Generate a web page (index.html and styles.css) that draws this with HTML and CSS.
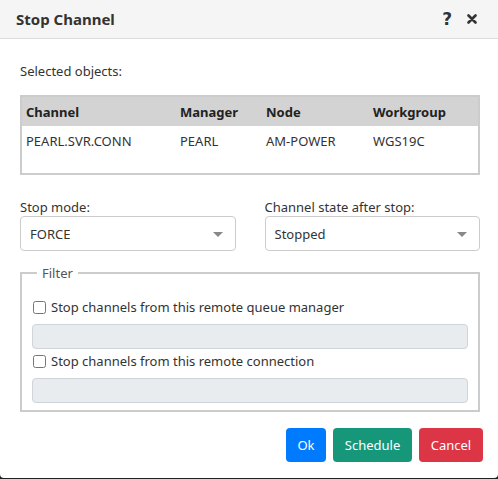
FILE: index.html
```html
<!DOCTYPE html>
<html lang="en">
<head>
    <meta charset="UTF-8">
    <meta name="viewport" content="width=device-width, initial-scale=1.0">
    <title>Stop Channel</title>
    <link rel="stylesheet" href="styles.css">
</head>
<body>
    <div class="dialog">
        <div class="dialog-header">
            <span class="dialog-title">Stop Channel</span>
            <span class="header-icons">
                <span class="icon-help">?</span>
                <svg class="icon-close" width="10" height="10" viewBox="0 0 10 10">
                    <path d="M1.5 1.5 L8.5 8.5 M8.5 1.5 L1.5 8.5" stroke="#333" stroke-width="2.6" stroke-linecap="round"/>
                </svg>
            </span>
        </div>

        <div class="dialog-body">
            <div class="section-label">Selected objects:</div>

            <div class="objects">
                <table>
                    <thead>
                        <tr>
                            <th class="col-channel">Channel</th>
                            <th class="col-manager">Manager</th>
                            <th class="col-node">Node</th>
                            <th>Workgroup</th>
                        </tr>
                    </thead>
                    <tbody>
                        <tr>
                            <td>PEARL.SVR.CONN</td>
                            <td>PEARL</td>
                            <td>AM-POWER</td>
                            <td>WGS19C</td>
                        </tr>
                    </tbody>
                </table>
            </div>

            <div class="selects">
                <div class="field">
                    <label>Stop mode:</label>
                    <div class="select">FORCE<span class="caret"></span></div>
                </div>
                <div class="field">
                    <label>Channel state after stop:</label>
                    <div class="select">Stopped<span class="caret"></span></div>
                </div>
            </div>

            <fieldset class="filter">
                <legend>Filter</legend>
                <label class="check"><input type="checkbox"> Stop channels from this remote queue manager</label>
                <input type="text" class="text-input" disabled>
                <label class="check"><input type="checkbox"> Stop channels from this remote connection</label>
                <input type="text" class="text-input" disabled>
            </fieldset>
        </div>

        <div class="dialog-footer">
            <button class="btn btn-ok">Ok</button>
            <button class="btn btn-schedule">Schedule</button>
            <button class="btn btn-cancel">Cancel</button>
        </div>
    </div>
</body>
</html>
```

FILE: styles.css
```css
html, body {
    margin: 0;
    padding: 0;
    background-color: #222;
}
body {
    font-family: 'Noto Sans', 'Open Sans', sans-serif;
    font-size: 13px;
    color: #333;
}
.dialog {
    width: 498px;
    height: 478px;
    background-color: white;
    border-radius: 0 0 4px 4px;
    overflow: hidden;
    display: flex;
    flex-direction: column;
}
.dialog-header {
    height: 39px;
    box-sizing: border-box;
    background-color: #f5f5f5;
    border-bottom: 1px solid #ddd;
    display: flex;
    align-items: center;
    justify-content: space-between;
    padding: 0 21px 0 16px;
}
.dialog-title {
    font-size: 15px;
    font-weight: bold;
    color: #333;
}
.header-icons {
    display: flex;
    align-items: center;
    gap: 15px;
}
.icon-help {
    font-size: 17px;
    font-weight: 900;
    color: #333;
    font-family: 'DejaVu Sans', sans-serif;
}
.dialog-body {
    padding: 23px 18px 0 20px;
}
.section-label {
    margin-bottom: 15px;
}
.objects {
    border: 2px solid #ccc;
    height: 80px;
    box-sizing: border-box;
}
table {
    width: 100%;
    border-collapse: collapse;
}
th {
    background-color: #d3d3d3;
    text-align: left;
    font-weight: bold;
    height: 29px;
    padding: 0 4px;
    color: #222;
}
td {
    padding: 0 4px;
    height: 30px;
}
.col-channel {
    width: 146px;
}
.col-manager {
    width: 78px;
}
.col-node {
    width: 99px;
}
.selects {
    display: flex;
    gap: 29px;
    margin-top: 23px;
}
.field {
    flex: 1;
}
.field label {
    display: block;
}
.select {
    position: relative;
    height: 35px;
    box-sizing: border-box;
    border: 1px solid #ccc;
    border-radius: 4px;
    padding: 0 9px;
    display: flex;
    align-items: center;
}
.caret {
    position: absolute;
    right: 12px;
    top: 15px;
    border-left: 5px solid transparent;
    border-right: 5px solid transparent;
    border-top: 5px solid #888;
}
.filter {
    margin: 13px 0 0 0;
    border: 2px solid #ccc;
    padding: 10px 10px 7px 10px;
}
.filter legend {
    padding: 0 5px;
    margin-left: 5px;
    color: #555;
}
.check {
    display: flex;
    align-items: center;
    gap: 5px;
    margin: 3px 0 8px 1px;
}
.filter legend + .check {
    margin-top: 6px;
}
.check input {
    margin: 0;
    width: 13px;
    height: 13px;
}
.text-input {
    display: block;
    width: 100%;
    box-sizing: border-box;
    height: 25px;
    background-color: #e9ecef;
    border: 1px solid #ced4da;
    border-radius: 4px;
}
.dialog-footer {
    display: flex;
    justify-content: flex-end;
    gap: 7px;
    padding: 16px 15px 0 0;
}
.btn {
    font-family: 'Noto Sans', 'Open Sans', sans-serif;
    font-size: 13px;
    color: white;
    border: none;
    border-radius: 4px;
    height: 34px;
    padding: 0;
    cursor: pointer;
}
.btn-ok {
    width: 40px;
    background-color: #007bff;
}
.btn-schedule {
    width: 79px;
    background-color: #17977a;
}
.btn-cancel {
    width: 64px;
    background-color: #dc3545;
}
```
